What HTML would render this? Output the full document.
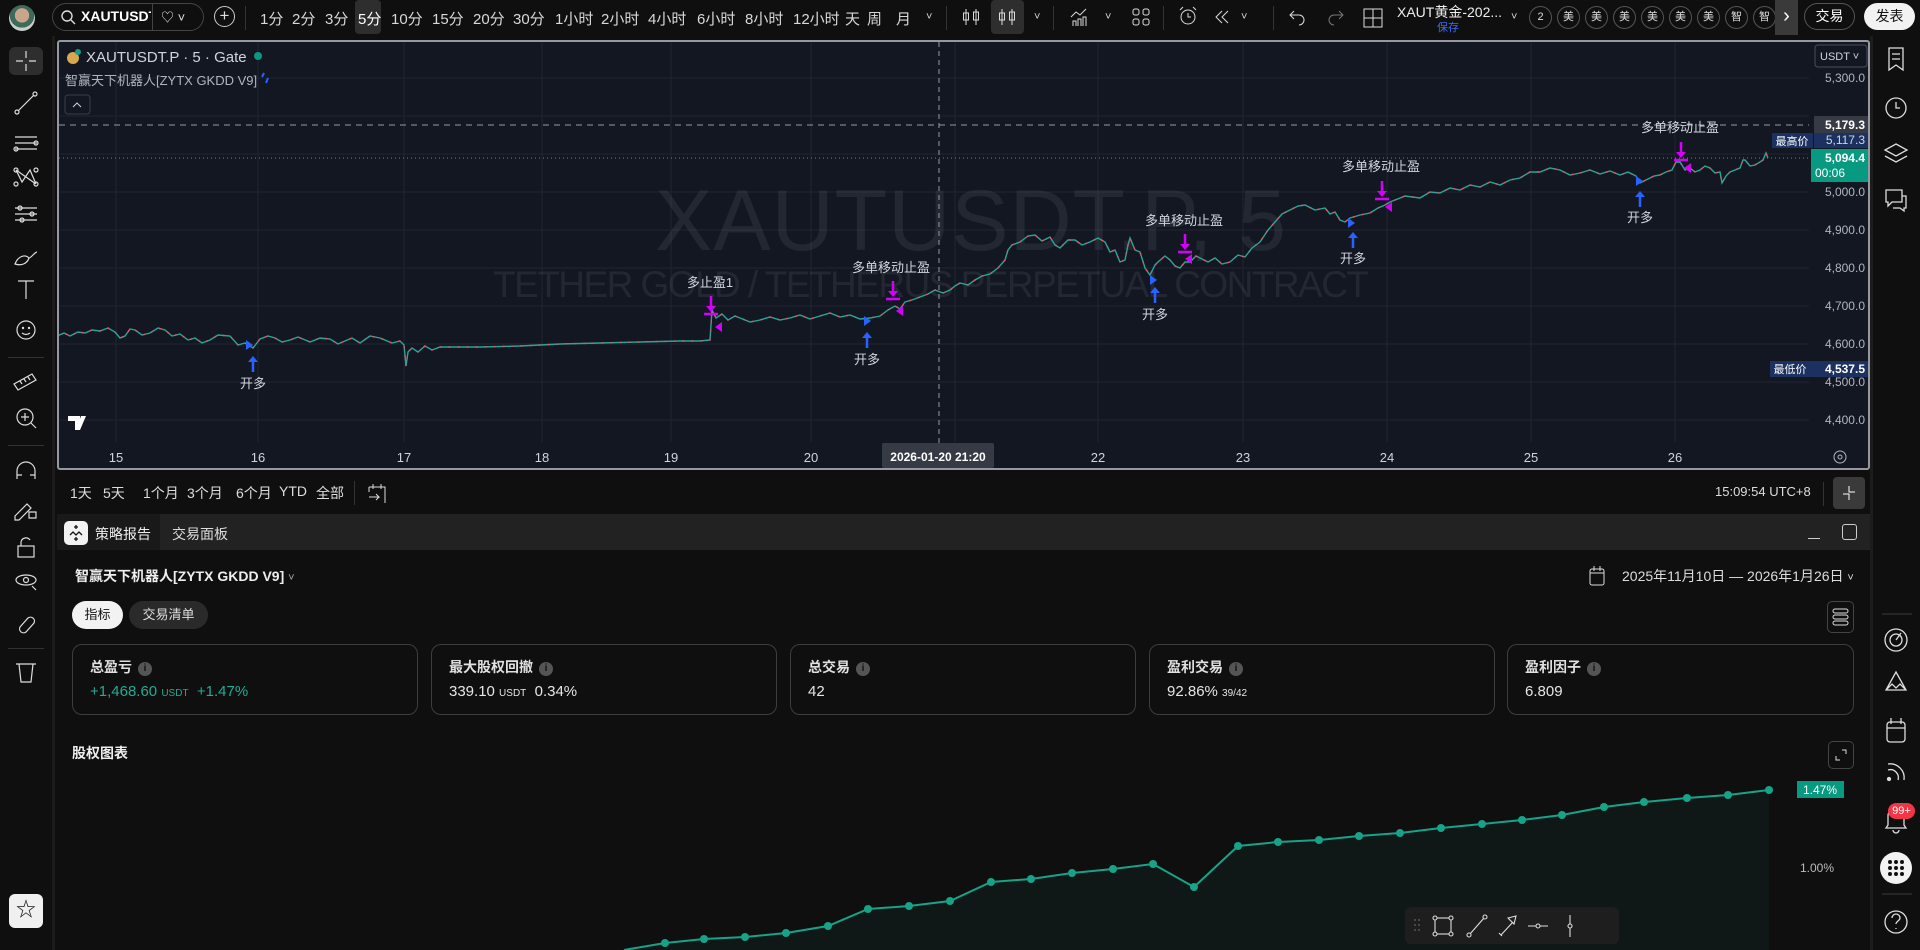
<!DOCTYPE html>
<html><head><meta charset="utf-8"><style>
*{margin:0;padding:0;box-sizing:border-box}
body{width:1920px;height:950px;background:#0f0f0f;overflow:hidden;position:relative;font-family:"Liberation Sans","Noto Sans CJK SC",sans-serif;color:#d1d4dc}
.a{position:absolute;white-space:nowrap}
.tf{position:absolute;top:8px;font-size:15px;color:#d8d8d8}
.circ{position:absolute;top:6px;width:23px;height:23px;border:1px solid #555;border-radius:50%;font-size:11px;color:#ddd;text-align:center;line-height:21px}
.sep{position:absolute;width:1px;background:#333}
.card{position:absolute;top:644px;height:71px;border:1px solid #3d3d3d;border-radius:10px}
.card .t{position:absolute;left:17px;top:12px;font-size:14px;font-weight:bold;color:#e0e0e0}
.card .v{position:absolute;left:17px;top:38px;font-size:15px;color:#e6e6e6}
.info{display:inline-block;width:14px;height:14px;border-radius:50%;background:#555;color:#111;font-size:10px;text-align:center;line-height:14px;margin-left:6px;vertical-align:1px;font-weight:bold}
.tr{position:absolute;top:483px;font-size:14px;color:#ddd}
</style></head><body>

<!-- top bar -->
<div class="a" style="left:9px;top:5px;width:26px;height:26px;border-radius:50%;background:radial-gradient(circle at 50% 40%,#c9a58a 0 35%,#3d6b5a 36% 60%,#ccc 61%)"></div>
<div class="a" style="left:52px;top:3px;width:152px;height:28px;border:1px solid #444;border-radius:14px"></div>
<svg class="a" style="left:60px;top:9px" width="16" height="16"><circle cx="7" cy="7" r="5" fill="none" stroke="#ddd" stroke-width="1.4"/><path d="M11 11l4 4" stroke="#ddd" stroke-width="1.4"/></svg>
<div class="a" style="left:81px;top:8px;width:70px;overflow:hidden;font-size:14px;font-weight:bold;color:#fff">XAUTUSDT</div>
<div class="sep" style="left:152px;top:4px;height:26px;background:#444"></div>
<div class="a" style="left:161px;top:7px;font-size:13px;color:#ddd">♡ ˅</div>
<div class="a" style="left:214px;top:6px;width:21px;height:21px;border:1px solid #ccc;border-radius:50%;text-align:center;line-height:18px;font-size:17px;color:#ddd">+</div>
<div class="sep" style="left:245px;top:6px;height:24px"></div>
<div class="a" style="left:355px;top:0;width:26px;height:34px;background:#2e2e2e;border-radius:4px"></div>
<div class="tf" style="left:260px">1分</div><div class="tf" style="left:292px">2分</div><div class="tf" style="left:325px">3分</div><div class="tf" style="left:358px;color:#fff">5分</div><div class="tf" style="left:391px">10分</div><div class="tf" style="left:432px">15分</div><div class="tf" style="left:473px">20分</div><div class="tf" style="left:513px">30分</div><div class="tf" style="left:555px">1小时</div><div class="tf" style="left:601px">2小时</div><div class="tf" style="left:648px">4小时</div><div class="tf" style="left:697px">6小时</div><div class="tf" style="left:745px">8小时</div><div class="tf" style="left:793px">12小时</div><div class="tf" style="left:845px">天</div><div class="tf" style="left:867px">周</div><div class="tf" style="left:896px">月</div><div class="tf" style="left:926px;font-size:11px;top:11px">˅</div>
<div class="sep" style="left:946px;top:6px;height:24px"></div>
<svg class="a" style="left:961px;top:7px" width="20" height="20"><path d="M5 2v16M15 2v16" stroke="#ddd"/><rect x="2.5" y="6" width="5" height="7" fill="none" stroke="#ddd"/><rect x="12.5" y="5" width="5" height="8" fill="none" stroke="#ddd"/></svg>
<div class="a" style="left:991px;top:0;width:33px;height:34px;background:#2e2e2e;border-radius:4px"></div>
<svg class="a" style="left:997px;top:7px" width="20" height="20"><path d="M5 2v16M15 2v16" stroke="#ddd"/><rect x="2.5" y="6" width="5" height="7" fill="none" stroke="#ddd"/><rect x="12.5" y="5" width="5" height="8" fill="none" stroke="#ddd"/></svg>
<div class="tf" style="left:1034px;font-size:11px;top:11px">˅</div>
<div class="sep" style="left:1053px;top:6px;height:24px"></div>
<svg class="a" style="left:1068px;top:6px" width="22" height="22"><path d="M3 11l5-5 4 3 6-6M5 20v-5h3v5M10 20v-7h3v7M15 20v-9h3v9" fill="none" stroke="#ddd"/></svg>
<div class="tf" style="left:1105px;font-size:11px;top:11px">˅</div>
<svg class="a" style="left:1131px;top:7px" width="20" height="20"><rect x="2" y="2" width="6" height="6" rx="2" fill="none" stroke="#ddd"/><rect x="12" y="2" width="6" height="6" rx="2" fill="none" stroke="#ddd"/><rect x="2" y="12" width="6" height="6" rx="2" fill="none" stroke="#ddd"/><rect x="12" y="12" width="6" height="6" rx="2" fill="none" stroke="#ddd"/></svg>
<div class="sep" style="left:1163px;top:6px;height:24px"></div>
<svg class="a" style="left:1177px;top:5px" width="22" height="24"><circle cx="11" cy="12" r="7" fill="none" stroke="#ddd"/><path d="M11 8v4h3M3 5l3-3M19 5l-3-3" stroke="#ddd" fill="none"/></svg>
<svg class="a" style="left:1213px;top:8px" width="20" height="18"><path d="M9 3l-6 6 6 6M15 3l-6 6 6 6" stroke="#ddd" fill="none"/></svg>
<div class="tf" style="left:1241px;font-size:11px;top:11px">˅</div>
<div class="sep" style="left:1273px;top:6px;height:24px"></div>
<svg class="a" style="left:1287px;top:8px" width="20" height="18"><path d="M7 3L3 7l4 4M3 7h9a5 5 0 010 10" stroke="#ddd" fill="none"/></svg>
<svg class="a" style="left:1326px;top:8px" width="20" height="18"><path d="M13 3l4 4-4 4M17 7H8a5 5 0 000 10" stroke="#777" fill="none"/></svg>
<svg class="a" style="left:1362px;top:7px" width="22" height="22"><rect x="2" y="2" width="18" height="18" fill="none" stroke="#ddd"/><path d="M11 2v18M2 11h18" stroke="#ddd"/></svg>
<div class="a" style="left:1397px;top:2px;font-size:14px;color:#eee">XAUT黄金-202...</div>
<div class="a" style="left:1437px;top:19px;font-size:11px;color:#3b6cf6">保存</div>
<div class="tf" style="left:1511px;font-size:11px;top:11px">˅</div>
<div class="circ" style="left:1529px">2</div><div class="circ" style="left:1557px">美</div><div class="circ" style="left:1585px">美</div><div class="circ" style="left:1613px">美</div><div class="circ" style="left:1641px">美</div><div class="circ" style="left:1669px">美</div><div class="circ" style="left:1697px">美</div><div class="circ" style="left:1725px">智</div><div class="circ" style="left:1753px">智</div>
<div class="a" style="left:1775px;top:0;width:23px;height:35px;background:#3a3a3a;color:#fff;font-size:20px;text-align:center;line-height:32px">›</div>
<div class="a" style="left:1804px;top:3px;width:51px;height:27px;border:1px solid #555;border-radius:14px;font-size:14px;color:#fff;text-align:center;line-height:25px">交易</div>
<div class="a" style="left:1864px;top:3px;width:51px;height:27px;background:#f2f2f2;border-radius:14px;font-size:14px;color:#111;text-align:center;line-height:27px">发表</div>

<!-- left toolbar -->
<div class="a" style="left:52px;top:36px;width:3px;height:914px;background:#1c1c1c"></div>
<div class="a" style="left:9px;top:47px;width:34px;height:28px;background:#2e2e2e;border-radius:6px"></div>
<svg class="a" style="left:0;top:0" width="52" height="950" fill="none" stroke="#ddd" stroke-width="1.2">
<g transform="translate(26,61)"><path d="M0-10v7M0 3v7M-10 0h7M3 0h7"/></g>
<g transform="translate(26,103)"><path d="M-8 8l16-16"/><circle cx="-9" cy="9" r="2"/><circle cx="9" cy="-9" r="2"/></g>
<g transform="translate(26,143)"><path d="M-11-6h22M-11 0h22M-11 6h22"/><circle cx="10" cy="0" r="2"/><circle cx="-10" cy="6" r="2"/></g>
<g transform="translate(26,177)"><path d="M-10-7l6 12 8-12 6 14M-10-7l20 14"/><circle cx="-10" cy="-7" r="2"/><circle cx="10" cy="-7" r="2"/><circle cx="-10" cy="7" r="2"/><circle cx="10" cy="7" r="2"/></g>
<g transform="translate(26,214)"><path d="M-11-6h22M-11 0h22M-11 6h22"/><circle cx="-6" cy="-6" r="2"/><circle cx="6" cy="0" r="2"/><circle cx="-4" cy="6" r="2"/></g>
<g transform="translate(26,258)"><path d="M-11 6c3-8 10-10 14-6-2 6-8 8-14 6zM3 0c2 0 6-6 8-6"/></g>
<g transform="translate(26,290)"><path d="M-8-9h16M0-9v18"/></g>
<g transform="translate(26,330)"><circle r="9"/><circle cx="-3" cy="-2" r=".6"/><circle cx="3" cy="-2" r=".6"/><path d="M-4 3q4 3 8 0"/></g>
<g transform="translate(26,380)"><path d="M-12 4l18-10 4 6-18 10zM-6 1l2 3M-2-1l2 3M2-3l2 3"/></g>
<g transform="translate(26,418)"><circle cx="-1" cy="-1" r="8"/><path d="M-1-5v8M-5-1h8M5 5l5 5"/></g>
<g transform="translate(26,470)"><path d="M-9 9v-8a9 9 0 0118 0v8M-9 5h5M4 5h5"/></g>
<g transform="translate(26,508)"><path d="M-11 8l12-12 4 4-12 12h-4zM3 4h7v6h-7z"/></g>
<g transform="translate(26,548)"><rect x="-8" y="-2" width="16" height="11"/><path d="M-5-2v-4a5 5 0 019-2"/></g>
<g transform="translate(26,580)"><ellipse rx="10" ry="5"/><circle r="2.5"/><path d="M6 6l4 4"/></g>
<g transform="translate(26,621)"><path d="M-6 6l8-9a4 4 0 016 5l-8 9a4 4 0 01-6-5z"/></g>
<g transform="translate(26,673)"><path d="M-10-9h20M-7-9l2 18h10l2-18"/></g>
</svg>
<div class="sep" style="left:8px;top:357px;width:36px;height:1px"></div>
<div class="sep" style="left:8px;top:445px;width:36px;height:1px"></div>
<div class="sep" style="left:8px;top:648px;width:36px;height:1px"></div>
<div class="a" style="left:9px;top:894px;width:34px;height:34px;background:#f0f0f0;border-radius:6px;text-align:center;line-height:32px;font-size:20px;color:#111">☆</div>

<!-- chart -->
<div class="a" style="left:57px;top:40px;width:1813px;height:430px;background:#131722;border:2px solid #9598a1;border-radius:3px;overflow:hidden">
<svg width="1813" height="430" style="position:absolute;left:-59px;top:-42px;overflow:visible" font-family="Liberation Sans,Noto Sans CJK SC,sans-serif">
<g stroke="#1f2433" stroke-width="1">
<path d="M59 78h1750M59 116h1750M59 154h1750M59 192h1750M59 230h1750M59 268h1750M59 306h1750M59 344h1750M59 382h1750M59 420h1750"/>
<path d="M116 42v400M258 42v400M404 42v400M542 42v400M671 42v400M811 42v400M955 42v400M1098 42v400M1243 42v400M1387 42v400M1531 42v400M1675 42v400"/>
</g>
<text x="655" y="250" font-size="86" fill="#ffffff" fill-opacity="0.07" textLength="631">XAUTUSDT.P, 5</text>
<text x="493" y="297" font-size="37" fill="#ffffff" fill-opacity="0.07" textLength="876">TETHER GOLD / TETHERUS PERPETUAL CONTRACT</text>
<path d="M939 42v430" stroke="#9598a1" stroke-dasharray="5 4"/>
<path d="M59 125h1750" stroke="#9598a1" stroke-dasharray="6 5"/>
<path d="M59 158h1750" stroke="#26a69a" stroke-dasharray="1 3"/>
<polyline fill="none" stroke="#26a69a" stroke-width="1.4" points="57,336 64,333 70,336 78,332 85,333 92,330 100,331 108,328 115,332 120,338 125,336 130,329 135,330 142,335 150,333 158,328 165,330 172,336 180,334 188,340 195,338 202,343 210,340 218,335 230,336 238,345 245,343 253,348 260,339 268,336 275,338 282,342 290,340 298,337 310,342 320,338 330,339 338,344 345,341 352,338 360,343 370,336 380,338 392,343 400,341 404,345 406,366 408,352 412,348 418,352 425,346 432,350 440,347 450,347 480,347 520,346 560,344 600,343 640,342 680,341 700,341 710,340 712,310 716,318 722,314 728,320 735,316 740,318 750,322 760,320 770,317 780,320 790,318 800,315 810,319 820,316 830,313 840,317 850,315 860,319 870,318 880,316 888,310 895,306 900,309 905,302 912,300 920,297 928,294 935,290 943,293 950,290 955,286 960,283 968,285 975,280 982,276 990,274 998,268 1005,260 1008,250 1012,245 1020,242 1028,236 1035,235 1042,241 1050,237 1055,245 1060,248 1068,240 1075,240 1082,245 1090,242 1098,238 1105,242 1110,252 1115,250 1120,262 1125,260 1128,245 1130,238 1135,250 1140,252 1145,268 1150,275 1155,265 1158,262 1165,256 1170,260 1175,266 1180,268 1185,262 1190,262 1196,256 1200,258 1208,262 1215,258 1222,264 1230,262 1238,255 1245,257 1252,248 1260,242 1268,230 1275,222 1282,214 1290,210 1298,206 1305,205 1315,210 1325,208 1330,214 1335,212 1340,220 1345,222 1350,218 1360,215 1370,213 1378,208 1385,205 1390,202 1395,200 1405,196 1420,198 1430,192 1440,193 1450,188 1460,190 1470,185 1480,187 1490,182 1500,185 1510,180 1520,178 1530,172 1540,172 1550,168 1560,170 1570,175 1580,173 1590,170 1600,174 1610,171 1620,175 1628,172 1636,176 1640,183 1648,179 1654,176 1660,175 1666,172 1672,170 1676,162 1680,162 1685,170 1690,168 1695,172 1700,170 1705,166 1710,168 1715,173 1720,172 1722,183 1726,176 1730,172 1735,170 1740,168 1743,160 1745,160 1750,166 1755,165 1760,162 1763,160 1766,153 1768,158"/>
<polyline fill="none" stroke="#ef5350" stroke-width="1.4" stroke-dasharray="2 7" points="57,336 64,333 70,336 78,332 85,333 92,330 100,331 108,328 115,332 120,338 125,336 130,329 135,330 142,335 150,333 158,328 165,330 172,336 180,334 188,340 195,338 202,343 210,340 218,335 230,336 238,345 245,343 253,348 260,339 268,336 275,338 282,342 290,340 298,337 310,342 320,338 330,339 338,344 345,341 352,338 360,343 370,336 380,338 392,343 400,341 404,345 406,366 408,352 412,348 418,352 425,346 432,350 440,347 450,347 480,347 520,346 560,344 600,343 640,342 680,341 700,341 710,340 712,310 716,318 722,314 728,320 735,316 740,318 750,322 760,320 770,317 780,320 790,318 800,315 810,319 820,316 830,313 840,317 850,315 860,319 870,318 880,316 888,310 895,306 900,309 905,302 912,300 920,297 928,294 935,290 943,293 950,290 955,286 960,283 968,285 975,280 982,276 990,274 998,268 1005,260 1008,250 1012,245 1020,242 1028,236 1035,235 1042,241 1050,237 1055,245 1060,248 1068,240 1075,240 1082,245 1090,242 1098,238 1105,242 1110,252 1115,250 1120,262 1125,260 1128,245 1130,238 1135,250 1140,252 1145,268 1150,275 1155,265 1158,262 1165,256 1170,260 1175,266 1180,268 1185,262 1190,262 1196,256 1200,258 1208,262 1215,258 1222,264 1230,262 1238,255 1245,257 1252,248 1260,242 1268,230 1275,222 1282,214 1290,210 1298,206 1305,205 1315,210 1325,208 1330,214 1335,212 1340,220 1345,222 1350,218 1360,215 1370,213 1378,208 1385,205 1390,202 1395,200 1405,196 1420,198 1430,192 1440,193 1450,188 1460,190 1470,185 1480,187 1490,182 1500,185 1510,180 1520,178 1530,172 1540,172 1550,168 1560,170 1570,175 1580,173 1590,170 1600,174 1610,171 1620,175 1628,172 1636,176 1640,183 1648,179 1654,176 1660,175 1666,172 1672,170 1676,162 1680,162 1685,170 1690,168 1695,172 1700,170 1705,166 1710,168 1715,173 1720,172 1722,183 1726,176 1730,172 1735,170 1740,168 1743,160 1745,160 1750,166 1755,165 1760,162 1763,160 1766,153 1768,158"/>
<g fill="#2962ff" stroke="#2962ff" stroke-width="2.5">
<path d="M253 372v-12" /><path d="M248 362l5-6 5 6z" stroke="none"/>
<path d="M867 348v-12"/><path d="M862 338l5-6 5 6z" stroke="none"/>
<path d="M1155 303v-12"/><path d="M1150 293l5-6 5 6z" stroke="none"/>
<path d="M1353 248v-12"/><path d="M1348 238l5-6 5 6z" stroke="none"/>
<path d="M1640 207v-12"/><path d="M1635 197l5-6 5 6z" stroke="none"/>
<path d="M246 340l7 5-7 5z" stroke="none"/><path d="M864 316l7 5-7 5z" stroke="none"/><path d="M1150 275l7 5-7 5z" stroke="none"/><path d="M1348 218l7 5-7 5z" stroke="none"/><path d="M1636 176l7 5-7 5z" stroke="none"/>
</g>
<g fill="#d500f9" stroke="#d500f9" stroke-width="2.5">
<path d="M711 296v12"/><path d="M706 306l5 6 5-6z" stroke="none"/><path d="M704 314h14"/>
<path d="M893 281v12"/><path d="M888 291l5 6 5-6z" stroke="none"/><path d="M886 299h14"/>
<path d="M1185 234v12"/><path d="M1180 244l5 6 5-6z" stroke="none"/><path d="M1178 252h14"/>
<path d="M1382 181v12"/><path d="M1377 191l5 6 5-6z" stroke="none"/><path d="M1375 199h14"/>
<path d="M1681 142v12"/><path d="M1676 152l5 6 5-6z" stroke="none"/><path d="M1674 160h14"/>
<path d="M722 322l-7 5 7 5z" stroke="none"/><path d="M903 306l-7 5 7 5z" stroke="none"/><path d="M1192 254l-7 5 7 5z" stroke="none"/><path d="M1392 202l-7 5 7 5z" stroke="none"/><path d="M1691 163l-7 5 7 5z" stroke="none"/>
</g>
<g font-size="13" fill="#d1d4dc" text-anchor="middle">
<text x="253" y="388">开多</text><text x="867" y="364">开多</text><text x="1155" y="319">开多</text><text x="1353" y="263">开多</text><text x="1640" y="222">开多</text>
<text x="710" y="287">多止盈1</text><text x="891" y="272">多单移动止盈</text><text x="1184" y="225">多单移动止盈</text><text x="1381" y="171">多单移动止盈</text><text x="1680" y="132">多单移动止盈</text>
</g>
<g font-size="13" fill="#d1d4dc" text-anchor="middle">
<text x="116" y="462">15</text><text x="258" y="462">16</text><text x="404" y="462">17</text><text x="542" y="462">18</text><text x="671" y="462">19</text><text x="811" y="462">20</text><text x="1098" y="462">22</text><text x="1243" y="462">23</text><text x="1387" y="462">24</text><text x="1531" y="462">25</text><text x="1675" y="462">26</text>
</g>
<rect x="882" y="443" width="112" height="25" rx="2" fill="#363a45"/>
<text x="938" y="461" font-size="12" fill="#fff" text-anchor="middle" font-weight="bold">2026-01-20   21:20</text>
<g font-size="12" fill="#b2b5be" text-anchor="end">
<text x="1865" y="82">5,300.0</text><text x="1865" y="196">5,000.0</text><text x="1865" y="234">4,900.0</text><text x="1865" y="272">4,800.0</text><text x="1865" y="310">4,700.0</text><text x="1865" y="348">4,600.0</text><text x="1865" y="386">4,500.0</text><text x="1865" y="424">4,400.0</text>
</g>
<rect x="1814" y="116" width="54" height="17" fill="#363a45"/><text x="1865" y="129" font-size="12" fill="#fff" text-anchor="end" font-weight="bold">5,179.3</text>
<rect x="1814" y="133" width="54" height="15" fill="#1c3160"/><text x="1865" y="144" font-size="12" fill="#d1d4dc" text-anchor="end">5,117.3</text>
<rect x="1772" y="133" width="41" height="15" fill="#1c3160"/><text x="1792" y="145" font-size="11" fill="#fff" text-anchor="middle">最高价</text>
<rect x="1811" y="149" width="57" height="33" fill="#089981"/><text x="1865" y="162" font-size="12" fill="#fff" text-anchor="end" font-weight="bold">5,094.4</text><text x="1815" y="177" font-size="12" fill="#fff">00:06</text>
<rect x="1811" y="361" width="57" height="16" fill="#1c3160"/><text x="1865" y="373" font-size="12" fill="#fff" text-anchor="end" font-weight="bold">4,537.5</text>
<rect x="1770" y="361" width="41" height="16" fill="#1c3160"/><text x="1790" y="373" font-size="11" fill="#fff" text-anchor="middle">最低价</text>
<rect x="1815" y="45" width="52" height="22" rx="3" fill="#131722" stroke="#4a4e5a"/><text x="1820" y="60" font-size="11" fill="#d1d4dc">USDT ˅</text>
<circle cx="1840" cy="457" r="6" fill="none" stroke="#b2b5be"/><circle cx="1840" cy="457" r="2" fill="none" stroke="#b2b5be"/>
<path d="M68 416h12v14h-5v-9h-7zM81 416h5l-6 14h-4z" fill="#fff"/>
<circle cx="73" cy="58" r="6" fill="#d8a84e"/><circle cx="78" cy="52" r="3" fill="#1a9a8a"/>
<text x="86" y="62" font-size="15" fill="#d1d4dc">XAUTUSDT.P · 5 · Gate</text>
<circle cx="258" cy="56" r="4" fill="#089981"/>
<text x="65" y="85" font-size="13" fill="#b2b5be">智赢天下机器人[ZYTX GKDD V9]</text>
<path d="M264 73l-2 4M268 78l-2 5" stroke="#2962ff" stroke-width="2"/>
<rect x="65" y="95" width="25" height="19" rx="3" fill="none" stroke="#3a3e4a"/><path d="M73 107l4-4 4 4" stroke="#d1d4dc" fill="none"/>
</svg>
</div>

<!-- time range row -->
<div class="a" style="left:57px;top:472px;width:1813px;height:40px;background:#0f0f0f"></div>
<div class="tr" style="left:70px">1天</div><div class="tr" style="left:103px">5天</div><div class="tr" style="left:143px">1个月</div><div class="tr" style="left:187px">3个月</div><div class="tr" style="left:236px">6个月</div><div class="tr" style="left:279px">YTD</div><div class="tr" style="left:316px">全部</div>
<div class="sep" style="left:354px;top:481px;height:24px"></div>
<svg class="a" style="left:366px;top:481px" width="22" height="24"><path d="M3 6h16v16M3 6v5M7 3v5M15 3v5M3 16h10l-3-3M13 16l-3 3" stroke="#ddd" fill="none"/></svg>
<div class="a" style="left:1715px;top:484px;font-size:13px;color:#ddd">15:09:54 UTC+8</div>
<div class="sep" style="left:1823px;top:482px;height:24px"></div>
<div class="a" style="left:1833px;top:477px;width:32px;height:32px;background:#3a3a3a;border-radius:4px"></div>
<svg class="a" style="left:1841px;top:485px" width="16" height="16"><path d="M8 1v6h6M8 15V9H2" stroke="#fff" fill="none"/></svg>

<!-- bottom panel -->
<div class="a" style="left:57px;top:514px;width:1813px;height:436px;background:#0f0f0f"></div>
<div class="a" style="left:57px;top:514px;width:1813px;height:36px;background:#222"></div>
<div class="a" style="left:57px;top:514px;width:103px;height:36px;background:#191919"></div>
<div class="a" style="left:64px;top:521px;width:24px;height:24px;background:#f2f2f2;border-radius:5px"></div>
<svg class="a" style="left:66px;top:523px" width="20" height="20"><path d="M10 2v4M8 4h4M4 12l3-3 3 3 3-3 3 3M10 14v4M8 16h4" stroke="#111" fill="none" stroke-width="1.3"/></svg>
<div class="a" style="left:95px;top:524px;font-size:14px;color:#eee">策略报告</div>
<div class="a" style="left:172px;top:524px;font-size:14px;color:#ddd">交易面板</div>
<div class="a" style="left:1808px;top:538px;width:12px;height:1px;background:#ccc"></div>
<div class="a" style="left:1842px;top:524px;width:15px;height:16px;border:1px solid #ccc;border-radius:3px"></div>

<div class="a" style="left:75px;top:566px;font-size:14px;font-weight:bold;color:#eee">智赢天下机器人[ZYTX GKDD V9] <span style="font-weight:normal;font-size:11px;color:#aaa">˅</span></div>
<svg class="a" style="left:1588px;top:564px" width="18" height="22"><rect x="2" y="5" width="14" height="16" rx="2" fill="none" stroke="#ddd"/><path d="M2 9h14M6 2v5M12 2v5" stroke="#ddd"/></svg>
<div class="a" style="left:1622px;top:566px;font-size:14px;color:#ddd">2025年11月10日 — 2026年1月26日 <span style="font-size:11px">˅</span></div>

<div class="a" style="left:72px;top:601px;width:51px;height:28px;background:#f2f2f2;border-radius:14px;font-size:13px;color:#111;text-align:center;line-height:28px">指标</div>
<div class="a" style="left:129px;top:601px;width:79px;height:28px;background:#2a2a2a;border-radius:14px;font-size:13px;color:#ddd;text-align:center;line-height:28px">交易清单</div>
<div class="a" style="left:1827px;top:601px;width:27px;height:32px;border:1px solid #444;border-radius:5px"></div>
<svg class="a" style="left:1832px;top:607px" width="17" height="20"><rect x="1" y="2" width="15" height="4" rx="2" fill="none" stroke="#ddd"/><rect x="1" y="8" width="15" height="4" rx="2" fill="none" stroke="#ddd"/><rect x="1" y="14" width="15" height="4" rx="2" fill="none" stroke="#ddd"/></svg>

<div class="card" style="left:72px;width:346px"><div class="t">总盈亏<span class="info">i</span></div><div class="v" style="color:#22ab94">+1,468.60 <span style="font-size:10px">USDT</span> &nbsp;+1.47%</div></div>
<div class="card" style="left:431px;width:346px"><div class="t">最大股权回撤<span class="info">i</span></div><div class="v">339.10 <span style="font-size:10px">USDT</span> &nbsp;0.34%</div></div>
<div class="card" style="left:790px;width:346px"><div class="t">总交易<span class="info">i</span></div><div class="v">42</div></div>
<div class="card" style="left:1149px;width:346px"><div class="t">盈利交易<span class="info">i</span></div><div class="v">92.86% <span style="font-size:10px">39/42</span></div></div>
<div class="card" style="left:1507px;width:347px"><div class="t">盈利因子<span class="info">i</span></div><div class="v">6.809</div></div>

<div class="a" style="left:72px;top:743px;font-size:14px;font-weight:bold;color:#eee">股权图表</div>
<div class="a" style="left:1828px;top:741px;width:26px;height:28px;border:1px solid #444;border-radius:5px"></div>
<svg class="a" style="left:1833px;top:747px" width="16" height="16"><path d="M9 3h4v4M3 9v4h4" stroke="#ddd" fill="none"/></svg>

<svg class="a" style="left:0;top:0" width="1870" height="950">
<polygon fill="#26a69a" fill-opacity="0.06" points="624,950 665,943 704,939 745,937 786,933 828,926 868,909 909,906 950,901 991,882 1031,879 1072,873 1113,869 1153,864 1194,887 1238,846 1278,842 1319,840 1359,836 1400,833 1441,828 1482,824 1522,820 1562,815 1604,807 1644,802 1687,798 1728,795 1769,790 1769,950"/>
<polyline fill="none" stroke="#17a387" stroke-width="2" points="624,950 665,943 704,939 745,937 786,933 828,926 868,909 909,906 950,901 991,882 1031,879 1072,873 1113,869 1153,864 1194,887 1238,846 1278,842 1319,840 1359,836 1400,833 1441,828 1482,824 1522,820 1562,815 1604,807 1644,802 1687,798 1728,795 1769,790"/>
<g fill="#17a387"><circle cx="665" cy="943" r="4"/><circle cx="704" cy="939" r="4"/><circle cx="745" cy="937" r="4"/><circle cx="786" cy="933" r="4"/><circle cx="828" cy="926" r="4"/><circle cx="868" cy="909" r="4"/><circle cx="909" cy="906" r="4"/><circle cx="950" cy="901" r="4"/><circle cx="991" cy="882" r="4"/><circle cx="1031" cy="879" r="4"/><circle cx="1072" cy="873" r="4"/><circle cx="1113" cy="869" r="4"/><circle cx="1153" cy="864" r="4"/><circle cx="1194" cy="887" r="4"/><circle cx="1238" cy="846" r="4"/><circle cx="1278" cy="842" r="4"/><circle cx="1319" cy="840" r="4"/><circle cx="1359" cy="836" r="4"/><circle cx="1400" cy="833" r="4"/><circle cx="1441" cy="828" r="4"/><circle cx="1482" cy="824" r="4"/><circle cx="1522" cy="820" r="4"/><circle cx="1562" cy="815" r="4"/><circle cx="1604" cy="807" r="4"/><circle cx="1644" cy="802" r="4"/><circle cx="1687" cy="798" r="4"/><circle cx="1728" cy="795" r="4"/><circle cx="1769" cy="790" r="4"/></g>
<rect x="1797" y="781" width="47" height="17" fill="#089981"/><text x="1820" y="794" font-size="12" fill="#fff" text-anchor="middle" font-family="Liberation Sans">1.47%</text>
<text x="1800" y="872" font-size="12" fill="#bbb" font-family="Liberation Sans">1.00%</text>
</svg>

<div class="a" style="left:1405px;top:907px;width:214px;height:37px;background:#1e1e1e;border-radius:6px"></div>
<svg class="a" style="left:1405px;top:907px" width="214" height="37" fill="none" stroke="#ddd" stroke-width="1.1">
<g fill="#555" stroke="none"><circle cx="10" cy="13" r="1"/><circle cx="14" cy="13" r="1"/><circle cx="10" cy="18" r="1"/><circle cx="14" cy="18" r="1"/><circle cx="10" cy="23" r="1"/><circle cx="14" cy="23" r="1"/></g>
<rect x="30" y="11" width="16" height="16"/><circle cx="30" cy="11" r="2" fill="#1e1e1e"/><circle cx="46" cy="11" r="2" fill="#1e1e1e"/><circle cx="30" cy="27" r="2" fill="#1e1e1e"/><circle cx="46" cy="27" r="2" fill="#1e1e1e"/>
<path d="M65 27l14-16"/><circle cx="64" cy="28" r="2" fill="#1e1e1e"/><circle cx="80" cy="10" r="2" fill="#1e1e1e"/>
<path d="M96 28l12-13M103 11l8-2-2 8zM94 26l3 3"/>
<path d="M123 19h20"/><circle cx="133" cy="19" r="2" fill="#1e1e1e"/>
<path d="M165 8v22"/><circle cx="165" cy="19" r="2" fill="#1e1e1e"/>
</svg>

<!-- right sidebar -->
<div class="a" style="left:1870px;top:36px;width:3px;height:914px;background:#1c1c1c"></div>
<svg class="a" style="left:1873px;top:0" width="47" height="950" fill="none" stroke="#ddd" stroke-width="1.3">
<path d="M16 48h14v22l-7-5-7 5zM19 54h8M19 59h8"/>
<circle cx="23" cy="108" r="10"/><path d="M23 102v6h4"/>
<path d="M23 144l11 6-11 6-11-6zM12 156l11 6 11-6"/>
<path d="M13 190h16v12h-10l-4 4v-4h-2zM29 196h4v12h-2v3l-4-3h-7"/>
<path d="M9 614h30" stroke="#333"/>
<circle cx="23" cy="640" r="11"/><circle cx="23" cy="640" r="6"/><path d="M23 640l5-7"/>
<path d="M23 672l10 18h-20zM13 690l6-6 4 4 4-4 6 6"/>
<rect x="14" y="722" width="18" height="20" rx="3"/><path d="M14 728h18M18 718v6M28 718v6"/>
<path d="M15 764a14 14 0 0116 16M15 770a8 8 0 0110 10"/><circle cx="16" cy="779" r="1.5" fill="#ddd"/>
<path d="M15 825v-9a8 8 0 0116 0v9l2 3h-20zM20 830a3 3 0 006 0"/>
<path d="M9 894h30" stroke="#333"/>
<circle cx="23" cy="922" r="11"/><path d="M19 918a4 4 0 118 0c0 3-4 3-4 6M23 928v1"/>
</svg>
<div class="a" style="left:1888px;top:803px;width:27px;height:16px;background:#f23645;border-radius:8px;font-size:11px;color:#fff;text-align:center;line-height:16px">99+</div>
<div class="a" style="left:1880px;top:852px;width:32px;height:32px;background:#f2f2f2;border-radius:50%"></div>
<svg class="a" style="left:1880px;top:852px" width="32" height="32" fill="#111"><circle cx="10" cy="10" r="2"/><circle cx="16" cy="10" r="2"/><circle cx="22" cy="10" r="2"/><circle cx="10" cy="16" r="2"/><circle cx="16" cy="16" r="2"/><circle cx="22" cy="16" r="2"/><circle cx="10" cy="22" r="2"/><circle cx="16" cy="22" r="2"/><circle cx="22" cy="22" r="2"/></svg>
</body></html>
